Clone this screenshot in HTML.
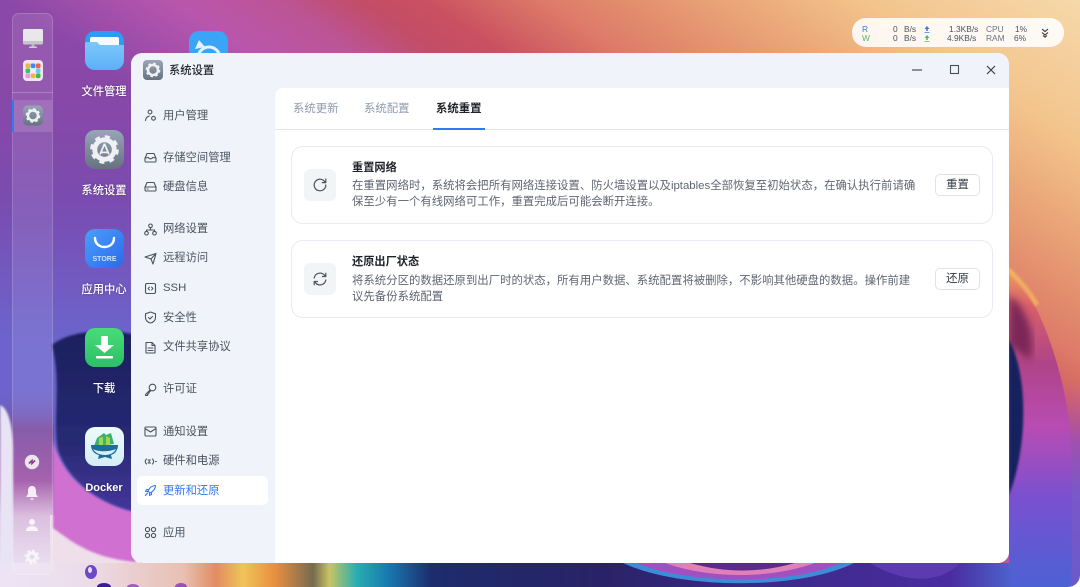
<!DOCTYPE html>
<html><head><meta charset="utf-8">
<style>
*{box-sizing:border-box;margin:0;padding:0}
html,body{width:1080px;height:587px;overflow:hidden;background:#fff}
body{position:relative;font-family:"Liberation Sans","Noto Sans CJK SC",sans-serif;}
.abs{position:absolute}
#root{position:absolute;left:0;top:0;width:1080px;height:587px;overflow:hidden;filter:blur(.35px)}
.dlabel{position:absolute;width:80px;left:64px;text-align:center;color:#fff;font-size:11.3px;line-height:14px;text-shadow:0 0 2px rgba(0,0,0,.35);font-weight:500}
.dicon{position:absolute;left:85px;width:39px;height:39px;border-radius:10px;overflow:hidden}
.nav{position:absolute;left:163px;font-size:11.3px;line-height:14px;color:#4b5360;white-space:nowrap}
.nic{position:absolute;left:144px;width:13px;height:13px;fill:none;stroke:#4b5360;stroke-width:1.1;stroke-linecap:round;stroke-linejoin:round}
.tab{position:absolute;top:102px;font-size:11.4px;line-height:14px;color:#8f9bb0}
.card{position:absolute;left:291px;width:702px;border:1px solid #e7ebf3;border-radius:12px;background:#fff}
.ib{position:absolute;left:304px;width:32px;height:32px;border-radius:6px;background:#f3f4f6}
.t{position:absolute;left:352px;font-size:11.2px;line-height:14px;font-weight:700;color:#1f2329;white-space:nowrap}
.d{position:absolute;left:352px;font-size:11.4px;line-height:16px;color:#5f6672;white-space:nowrap}
.btn{position:absolute;left:935px;width:45px;height:22px;border:1px solid #dde2ec;border-radius:5px;background:#fff;text-align:center;font-size:11.4px;line-height:20px;color:#333a45}
.w{position:absolute;font-size:8.4px;line-height:10px;color:#4b5360;white-space:nowrap}
</style></head>
<body>
<div id="root">
<svg class="abs" style="left:0;top:0" width="1080" height="587" viewBox="0 0 1080 587">
<defs>
<linearGradient id="top" gradientUnits="userSpaceOnUse" x1="0" y1="0" x2="332" y2="-498">
<stop offset="0" stop-color="#8a48a8"/><stop offset=".16" stop-color="#b956ad"/><stop offset=".26" stop-color="#bc5494"/><stop offset=".33" stop-color="#c24d68"/><stop offset=".39" stop-color="#c95060"/><stop offset=".5" stop-color="#dd7a68"/><stop offset=".65" stop-color="#e8a074"/><stop offset=".8" stop-color="#f3c48c"/><stop offset="1" stop-color="#f6d8aa"/>
</linearGradient>
<linearGradient id="left" gradientUnits="userSpaceOnUse" x1="0" y1="60" x2="0" y2="340">
<stop offset="0" stop-color="#8048a8" stop-opacity="0"/><stop offset=".5" stop-color="#7a4cb0"/><stop offset="1" stop-color="#6c64cc"/>
</linearGradient>
<linearGradient id="dockc" gradientUnits="userSpaceOnUse" x1="0" y1="390" x2="0" y2="570">
<stop offset="0" stop-color="#6c60c4" stop-opacity="0"/><stop offset=".22" stop-color="#7a4aa0"/><stop offset=".5" stop-color="#9c50a4"/><stop offset=".7" stop-color="#d8b8dc"/><stop offset="1" stop-color="#e8e0f0"/>
</linearGradient>
<linearGradient id="navy" x1="0" y1="0" x2="0" y2="1">
<stop offset="0" stop-color="#1c1f5e"/><stop offset=".6" stop-color="#262a72"/><stop offset="1" stop-color="#45369c"/>
</linearGradient>
<linearGradient id="rlow" gradientUnits="userSpaceOnUse" x1="0" y1="380" x2="0" y2="587">
<stop offset="0" stop-color="#c060a0" stop-opacity="0"/><stop offset=".3" stop-color="#a050b0"/><stop offset=".55" stop-color="#7a58c8"/><stop offset="1" stop-color="#6a5ac8"/>
</linearGradient>
<linearGradient id="sw" gradientUnits="userSpaceOnUse" x1="0" y1="267" x2="0" y2="587">
<stop offset="0" stop-color="#efa45e"/><stop offset=".12" stop-color="#d8606a"/><stop offset=".3" stop-color="#b04488"/><stop offset=".5" stop-color="#b84cb4"/><stop offset=".72" stop-color="#7a50d0"/><stop offset="1" stop-color="#4c62d4"/>
</linearGradient>
<linearGradient id="bot" x1="0" y1="0" x2="1" y2="0">
<stop offset="0" stop-color="#ece4f6"/><stop offset=".08" stop-color="#ecdcea"/><stop offset=".17" stop-color="#e8c0b2"/><stop offset=".2" stop-color="#e28c62"/><stop offset=".225" stop-color="#f0c458"/><stop offset=".255" stop-color="#e88e40"/><stop offset=".29" stop-color="#766a50"/><stop offset=".305" stop-color="#c8c464"/><stop offset=".33" stop-color="#28aeb0"/><stop offset=".36" stop-color="#1878b0"/><stop offset=".4" stop-color="#1c2c6c"/><stop offset=".56" stop-color="#2a2268"/><stop offset=".7" stop-color="#3a2a88"/><stop offset=".88" stop-color="#4a2ca0"/><stop offset=".95" stop-color="#4c70d6"/><stop offset="1" stop-color="#5a5cd0"/>
</linearGradient>
<filter id="b2"><feGaussianBlur stdDeviation="2"/></filter>
<filter id="b4"><feGaussianBlur stdDeviation="4"/></filter>
<filter id="b1"><feGaussianBlur stdDeviation="1"/></filter>
</defs>
<rect width="1080" height="587" fill="url(#top)"/>
<rect x="0" y="0" width="136" height="587" fill="url(#left)"/>
<!-- left swirl -->
<rect x="0" y="390" width="54" height="197" fill="url(#dockc)"/>
<rect x="50" y="515" width="90" height="50" fill="#efdfea"/>
<path d="M53 440 C62 480 100 505 136 512 L136 562 C90 558 70 540 53 528Z" fill="#d070d0" filter="url(#b1)"/>
<path d="M52 345 C70 330 110 328 136 335 L136 512 C105 505 70 485 58 450 C52 420 62 385 52 345Z" fill="url(#navy)" filter="url(#b1)"/>
<path d="M0 405 C8 408 13 425 13 450 L13 587 L0 587Z" fill="#e8e4f5" filter="url(#b1)"/>
<!-- bottom -->
<rect x="0" y="563" width="1080" height="24" fill="url(#bot)"/>
<path d="M623 563 C680 590 800 590 854 563Z" fill="#3e8cd8"/>
<path d="M636 563 C690 585 790 585 842 563Z" fill="#a050c0"/>
<path d="M665 563 C710 579 770 579 815 563Z" fill="#e080b8"/>
<path d="M690 563 C725 573 760 573 795 563Z" fill="#5a2a8c"/>
<path d="M870 563 C905 584 940 584 960 563Z" fill="#5c3ab0"/>
<ellipse cx="91" cy="572" rx="6" ry="7" fill="#6d48c8"/><ellipse cx="90" cy="570" rx="2" ry="3" fill="#e8e0ff"/>
<ellipse cx="104" cy="587" rx="7" ry="4" fill="#3a1c9a"/><ellipse cx="133" cy="587" rx="6" ry="3" fill="#a05cc0"/><ellipse cx="181" cy="587" rx="6" ry="4" fill="#9a50b8"/>
<!-- right swirl -->
<rect x="1009" y="380" width="71" height="207" fill="url(#rlow)"/>
<path d="M1009 267 C1040 300 1064 370 1070 430 C1073 490 1072 550 1071 587 L1009 587Z" fill="url(#sw)"/>
<path d="M1009 270 C1020 281 1030 293 1037 305" stroke="#f6b860" stroke-width="5" fill="none" filter="url(#b1)" opacity=".75"/>
<path d="M1009 295 L1018 303 C1030 320 1036 340 1030 360 L1009 345Z" fill="#7c2858" filter="url(#b4)"/>
<path d="M1009 340 C1026 370 1030 440 1009 495Z" fill="#14205e" filter="url(#b1)"/>
</svg>

<!-- screen corners -->
<div class="abs" style="left:-12px;top:-60px;width:1092px;height:647px;border-radius:0 0 12px 12px;box-shadow:0 0 0 12px #fff;pointer-events:none"></div>

<!-- dock -->
<div class="abs" style="left:12px;top:13px;width:41px;height:562px;border-radius:7px;background:rgba(255,255,255,.1);border:1px solid rgba(255,255,255,.16)"></div>
<div class="abs" style="left:12px;top:92px;width:41px;height:1px;background:rgba(255,255,255,.22)"></div>
<div class="abs" style="left:13px;top:100px;width:39px;height:32px;background:rgba(255,255,255,.13)"></div>
<div class="abs" style="left:12px;top:100px;width:2px;height:32px;background:#2f7bf0"></div>
<svg class="abs" style="left:22px;top:28px" width="22" height="21" viewBox="0 0 22 21"><rect x="1" y="1" width="20" height="15" rx="1.5" fill="#e8e8ea"/><path d="M1 13h20v2a1.500 1.500 0 0 1-1.500 1.500h-17A1.500 1.500 0 0 1 1 15Z" fill="#c6c6ca"/><rect x="9.500" y="16" width="3" height="3" fill="#b8b8bc"/><rect x="7" y="18.500" width="8" height="1.500" rx=".7" fill="#d0d0d4"/></svg>
<svg class="abs" style="left:23px;top:60px" width="20" height="21" viewBox="0 0 20 21"><rect width="20" height="21" rx="4" fill="#efe6f0"/><rect x="2.500" y="3.500" width="4.600" height="4.600" rx="1.200" fill="#f2b43c"/><rect x="7.700" y="3.500" width="4.600" height="4.600" rx="1.200" fill="#3b8cf0"/><rect x="12.900" y="3.500" width="4.600" height="4.600" rx="1.200" fill="#f0604c"/><rect x="2.500" y="8.500" width="4.600" height="4.600" rx="1.200" fill="#35c46a"/><rect x="7.700" y="8.500" width="4.600" height="4.600" rx="1.200" fill="#eef2f8"/><rect x="12.900" y="8.500" width="4.600" height="4.600" rx="1.200" fill="#6cc8f4"/><rect x="2.500" y="13.500" width="4.600" height="4.600" rx="1.200" fill="#e89ad8"/><rect x="7.700" y="13.500" width="4.600" height="4.600" rx="1.200" fill="#f4b050"/><rect x="12.900" y="13.500" width="4.600" height="4.600" rx="1.200" fill="#40b848"/></svg>
<svg class="abs" style="left:23px;top:105px" width="20" height="21" viewBox="0 0 40 40"><defs><linearGradient id="g1" x1="0" y1="0" x2="0" y2="1"><stop offset="0" stop-color="#98a6b8"/><stop offset="1" stop-color="#66727f"/></linearGradient></defs><rect width="40" height="40" rx="9" fill="url(#g1)"/><circle cx="20" cy="20" r="10" fill="none" stroke="#eef0f3" stroke-width="5"/><circle cx="20" cy="20" r="13" fill="none" stroke="#eef0f3" stroke-width="3.500" stroke-dasharray="5.100 5.100"/></svg>
<!-- dock bottom icons -->
<svg class="abs" style="left:24px;top:454px" width="16" height="16" viewBox="0 0 16 16"><circle cx="8" cy="8" r="7.200" fill="#ece4ee"/><path d="M5 9.500 L8 6.500 L8 9.500 L11 6.500" stroke="#8a3c88" stroke-width="1.600" fill="none"/></svg>
<svg class="abs" style="left:25px;top:485px" width="14" height="16" viewBox="0 0 14 16"><path d="M7 1C4 1 3 3.500 3 6v3L1 12h12l-2-3V6c0-2.500-1-5-4-5Z" fill="#f6ecf6"/><path d="M5 13.500a2 1.400 0 0 0 4 0Z" fill="#f6ecf6"/></svg>
<svg class="abs" style="left:25px;top:518px" width="14" height="14" viewBox="0 0 14 14"><circle cx="7" cy="4" r="3" fill="#f8f4fa"/><path d="M1 13c0-3.500 3-5 6-5s6 1.500 6 5Z" fill="#f8f4fa"/></svg>
<svg class="abs" style="left:24px;top:549px" width="16" height="16" viewBox="0 0 16 16"><circle cx="8" cy="8" r="4" fill="none" stroke="#f8f4fa" stroke-width="3.200"/><circle cx="8" cy="8" r="6.300" fill="none" stroke="#f8f4fa" stroke-width="2.400" stroke-dasharray="2.500 2.450"/></svg>

<!-- desktop icons -->
<div class="dicon" style="top:31px"><svg width="39" height="39" viewBox="0 0 39 39"><defs><linearGradient id="f1" x1="0" y1="0" x2="0" y2="1"><stop offset="0" stop-color="#7cc8fa"/><stop offset="1" stop-color="#5cb0f6"/></linearGradient></defs><rect width="39" height="39" fill="#2d9cf4"/><path d="M5 15 V8 Q5 6 7 6 H32 Q34 6 34 8 V15Z" fill="#f6fafd"/><path d="M0 13 Q0 11 2 11 L12 11 L15 14 L39 14 L39 39 L0 39Z" fill="url(#f1)"/></svg></div>
<div class="dlabel" style="top:85px">文件管理</div>
<div class="dicon" style="left:189px;top:31px"><svg width="39" height="39" viewBox="0 0 39 39"><rect width="39" height="39" fill="#3aa4f6"/><circle cx="20" cy="27" r="11" fill="none" stroke="#e4f2fc" stroke-width="3"/><path d="M6 18 L16 16 L10 9Z" fill="#e4f2fc"/></svg></div>
<div class="dicon" style="top:130px"><svg width="39" height="39" viewBox="0 0 40 40"><defs><linearGradient id="g2" x1="0" y1="0" x2="0" y2="1"><stop offset="0" stop-color="#98a6b8"/><stop offset="1" stop-color="#66727f"/></linearGradient></defs><rect width="40" height="40" fill="url(#g2)"/><circle cx="20" cy="20" r="10" fill="none" stroke="#eef0f3" stroke-width="5"/><circle cx="20" cy="20" r="13" fill="none" stroke="#eef0f3" stroke-width="3.500" stroke-dasharray="5.100 5.100"/><path d="M20 14 L15.500 25 M20 14 L24.500 25 M16.500 23 H23.500" stroke="#eef0f3" stroke-width="1.800"/></svg></div>
<div class="dlabel" style="top:184px">系统设置</div>
<div class="dicon" style="top:229px"><svg width="39" height="39" viewBox="0 0 39 39"><defs><linearGradient id="g3" x1="0" y1="0" x2="1" y2="1"><stop offset="0" stop-color="#4aa0f8"/><stop offset="1" stop-color="#2c68ee"/></linearGradient></defs><rect width="39" height="39" fill="url(#g3)"/><path d="M10 9 C10 21 29 21 29 9" stroke="#fff" stroke-width="2.400" fill="none" stroke-linecap="round"/><text x="19.500" y="32" text-anchor="middle" font-size="7" font-weight="700" fill="#cfe2fc" font-family="Liberation Sans">STORE</text></svg></div>
<div class="dlabel" style="top:283px">应用中心</div>
<div class="dicon" style="top:328px"><svg width="39" height="39" viewBox="0 0 39 39"><defs><linearGradient id="g4" x1="0" y1="0" x2="0" y2="1"><stop offset="0" stop-color="#48dc78"/><stop offset="1" stop-color="#2cc068"/></linearGradient></defs><rect width="39" height="39" fill="url(#g4)"/><path d="M16 8h7v9h6L19.500 25 10 17h6Z" fill="#fff"/><rect x="11" y="28" width="17" height="2.500" rx="1" fill="#fff"/></svg></div>
<div class="dlabel" style="top:382px">下载</div>
<div class="dicon" style="top:427px"><svg width="39" height="39" viewBox="0 0 39 39"><defs><linearGradient id="g5" x1="0" y1="0" x2="0" y2="1"><stop offset="0" stop-color="#eefafb"/><stop offset="1" stop-color="#d4eef4"/></linearGradient></defs><rect width="39" height="39" fill="url(#g5)"/><path d="M9 19l3-8 7-5 2 2 5-2 3 11Z" fill="#3fb16c"/><path d="M14 18v-7l4-1v8ZM21 18V9l4 2v7Z" fill="#9ed84e"/><path d="M6 18h27c0 5-3 9-7 10l1 4-7-2-7 2 1-4C9 27 6 23 6 18Z" fill="#1c6f9c"/><path d="M8 22c5 3 16 3 23 0-2 4-6 6-11 6s-10-2-12-6Z" fill="#d8f0f6"/></svg></div>
<div class="dlabel" style="top:481px;font-weight:700;font-size:11px">Docker</div>

<!-- widget -->
<div class="abs" style="left:852px;top:18px;width:212px;height:29px;border-radius:14px;background:rgba(255,255,255,.88)"></div>
<div class="w" style="left:862px;top:24px;color:#3a7ae8">R</div>
<div class="w" style="left:862px;top:33px;color:#55b56a">W</div>
<div class="w" style="left:893px;top:24px">0</div><div class="w" style="left:893px;top:33px">0</div>
<div class="w" style="left:904px;top:24px">B/s</div><div class="w" style="left:904px;top:33px">B/s</div>
<svg class="abs" style="left:924px;top:25px" width="6" height="18" viewBox="0 0 6 18"><path d="M3 1 L5.500 4 H.5Z M2.200 4h1.600v2H2.200Z M.5 7h5v.8H.5Z" fill="#3a7ae8"/><path d="M3 10 L5.500 13 H.5Z M2.200 13h1.600v2H2.200Z M.5 16h5v.8H.5Z" fill="#55b56a"/></svg>
<div class="w" style="left:949px;top:24px">1.3KB/s</div><div class="w" style="left:947px;top:33px">4.9KB/s</div>
<div class="w" style="left:986px;top:24px;color:#6c7485">CPU</div><div class="w" style="left:986px;top:33px;color:#6c7485">RAM</div>
<div class="w" style="left:1015px;top:24px">1%</div><div class="w" style="left:1014px;top:33px">6%</div>
<svg class="abs" style="left:1041px;top:28px" width="8" height="10" viewBox="0 0 8 10"><path d="M1 1l3 2.500L7 1M1 4.500L4 7l3-2.500M2 7.500L4 9.200 6 7.500" fill="none" stroke="#333" stroke-width="1.100"/></svg>

<!-- window -->
<div class="abs" style="left:131px;top:53px;width:878px;height:510px;border-radius:11px;background:#f0f3f9;overflow:hidden">
<div class="abs" style="left:144px;top:35px;width:734px;height:475px;background:#fff;border-top-left-radius:8px"></div>
</div>
<svg class="abs" style="left:143px;top:60px" width="20" height="20" viewBox="0 0 40 40"><defs><linearGradient id="g6" x1="0" y1="0" x2="0" y2="1"><stop offset="0" stop-color="#98a6b8"/><stop offset="1" stop-color="#66727f"/></linearGradient></defs><rect width="40" height="40" rx="8" fill="url(#g6)"/><circle cx="20" cy="20" r="10" fill="none" stroke="#eef0f3" stroke-width="5"/><circle cx="20" cy="20" r="13" fill="none" stroke="#eef0f3" stroke-width="3.500" stroke-dasharray="5.100 5.100"/></svg>
<div class="abs" style="left:169px;top:64px;font-size:11.3px;line-height:14px;color:#23272e;font-weight:500">系统设置</div>
<svg class="abs" style="left:911px;top:64px" width="90" height="12" viewBox="0 0 90 12"><path d="M1 6h10" stroke="#4a4f58" stroke-width="1.200"/><rect x="39.500" y="1.500" width="8" height="8" fill="none" stroke="#4a4f58" stroke-width="1.100"/><path d="M76 2l8 8M84 2l-8 8" stroke="#3a3f48" stroke-width="1.200"/></svg>

<!-- sidebar -->
<svg class="nic" style="top:109px" viewBox="0 0 13 13"><circle cx="6" cy="3" r="1.900"/><path d="M1.500 11.500c.3-2.500 1.800-4 3.700-4.400"/><circle cx="9.500" cy="9.300" r="1.900"/></svg><div class="nav" style="top:108.500px">用户管理</div>
<svg class="nic" style="top:151px" viewBox="0 0 13 13"><path d="M1 7.500 L3 2.500h7l2 5v2.500a1 1 0 0 1-1 1H2a1 1 0 0 1-1-1Z"/><path d="M1 7l3.500-.5c.5 1.800 3.500 1.800 4 0L12 7"/></svg><div class="nav" style="top:150.500px">存储空间管理</div>
<svg class="nic" style="top:180px" viewBox="0 0 13 13"><path d="M1 7 L3 2.500h7L12 7v3a1 1 0 0 1-1 1H2a1 1 0 0 1-1-1Z"/><path d="M1 7h11M3 9h1"/></svg><div class="nav" style="top:180px">硬盘信息</div>
<svg class="nic" style="top:223px" viewBox="0 0 13 13"><circle cx="6.500" cy="2.800" r="1.800"/><circle cx="2.500" cy="10.200" r="1.800"/><circle cx="10.500" cy="10.200" r="1.800"/><path d="M6.500 4.600v2.400M2.500 8.400V7h8v1.400"/></svg><div class="nav" style="top:222px">网络设置</div>
<svg class="nic" style="top:252px" viewBox="0 0 13 13"><path d="M1 5 L12 1.500 L9 12 L7 7 Z M7 7 L12 1.500"/></svg><div class="nav" style="top:251px">远程访问</div>
<svg class="nic" style="top:282px" viewBox="0 0 13 13"><rect x="1.500" y="1.500" width="10" height="10" rx="1.500"/><path d="M5.500 5L4 6.500 5.500 8M7.500 5L9 6.500 7.500 8" stroke-width=".9"/></svg><div class="nav" style="top:281px">SSH</div>
<svg class="nic" style="top:311px" viewBox="0 0 13 13"><path d="M6.500 1 L11.500 2.800V6.500C11.500 9.500 9 11.500 6.500 12 4 11.500 1.500 9.500 1.500 6.500V2.800Z"/><path d="M4.500 6.500l1.500 1.500 2.500-2.500"/></svg><div class="nav" style="top:310.500px">安全性</div>
<svg class="nic" style="top:341px" viewBox="0 0 13 13"><path d="M2 1.500h6l3 3v7.500H2Z"/><path d="M8 1.500v3h3M4 7h5M4 9.500h5"/></svg><div class="nav" style="top:340px">文件共享协议</div>
<svg class="nic" style="top:383px" viewBox="0 0 13 13"><circle cx="8.500" cy="4.500" r="3.300"/><path d="M6 7L1.500 11.500v1h2V11h1.200V9.800L6.500 8"/></svg><div class="nav" style="top:382px">许可证</div>
<svg class="nic" style="top:425px" viewBox="0 0 13 13"><rect x="1" y="2" width="11" height="9" rx="1"/><path d="M1 3.500l5.500 3.500L12 3.500"/></svg><div class="nav" style="top:424.500px">通知设置</div>
<svg class="nic" style="top:455px" viewBox="0 0 13 13" stroke-width=".9"><path d="M2.500 4C.8 5.500.8 7.500 2.500 9M8.500 4c1.500 1.500 1.500 3.500 0 5M4 5h2.500M6.500 8H4M5.200 5v3"/><path d="M11.500 6.500h.8"/></svg><div class="nav" style="top:454px">硬件和电源</div>
<div class="abs" style="left:137px;top:476px;width:131px;height:29px;border-radius:5px;background:#fff"></div>
<svg class="nic" style="top:484px;stroke:#2f7bf0" viewBox="0 0 13 13"><path d="M11.500 1.500C8 1.500 5.500 4 4 7l2 2c3-1.500 5.500-4 5.500-7.500Z"/><path d="M4.500 5.500H2.500L1.500 7.500l2.500 0M7.500 8.500V10.500L5.500 11.500V9M3.500 9l-2 2.500"/></svg><div class="nav" style="top:483.500px;color:#2f7bf0">更新和还原</div>
<svg class="nic" style="top:526px" viewBox="0 0 13 13"><circle cx="3.500" cy="3.500" r="2.100"/><circle cx="9.500" cy="3.500" r="2.100"/><circle cx="3.500" cy="9.500" r="2.100"/><circle cx="9.500" cy="9.500" r="2.100"/></svg><div class="nav" style="top:526px">应用</div>

<!-- tabs -->
<div class="tab" style="left:293px">系统更新</div>
<div class="tab" style="left:364px">系统配置</div>
<div class="tab" style="left:436px;color:#1f2329;font-weight:700">系统重置</div>
<div class="abs" style="left:275px;top:129px;width:734px;height:1px;background:#dfe4ee"></div>
<div class="abs" style="left:433px;top:128px;width:52px;height:1.500px;background:#2f7bf0"></div>

<!-- cards -->
<div class="card" style="top:146px;height:78px"></div>
<div class="ib" style="top:169px"></div>
<svg class="abs" style="left:312px;top:177px" width="16" height="16" viewBox="0 0 16 16"><path d="M13.800 8a5.800 5.800 0 1 1-1.700-4.100L13.800 5.600M13.800 2v3.600h-3.600" fill="none" stroke="#4b5360" stroke-width="1.200" stroke-linecap="round" stroke-linejoin="round"/></svg>
<div class="t" style="top:161px">重置网络</div>
<div class="d" style="top:178px">在重置网络时，系统将会把所有网络连接设置、防火墙设置以及iptables全部恢复至初始状态，在确认执行前请确<br>保至少有一个有线网络可工作，重置完成后可能会断开连接。</div>
<div class="btn" style="top:174px">重置</div>

<div class="card" style="top:240px;height:78px"></div>
<div class="ib" style="top:263px"></div>
<svg class="abs" style="left:312px;top:271px" width="16" height="16" viewBox="0 0 16 16"><path d="M2.200 7A5.900 5.900 0 0 1 12.500 4.200L13.800 5.500M13.800 2.200v3.300h-3.300M13.800 9a5.900 5.900 0 0 1-10.300 2.800L2.200 10.500M2.200 13.800v-3.300h3.300" fill="none" stroke="#4b5360" stroke-width="1.200" stroke-linecap="round" stroke-linejoin="round"/></svg>
<div class="t" style="top:255px">还原出厂状态</div>
<div class="d" style="top:272.500px">将系统分区的数据还原到出厂时的状态，所有用户数据、系统配置将被删除，不影响其他硬盘的数据。操作前建<br>议先备份系统配置</div>
<div class="btn" style="top:268px">还原</div>
</div>
</body></html>
